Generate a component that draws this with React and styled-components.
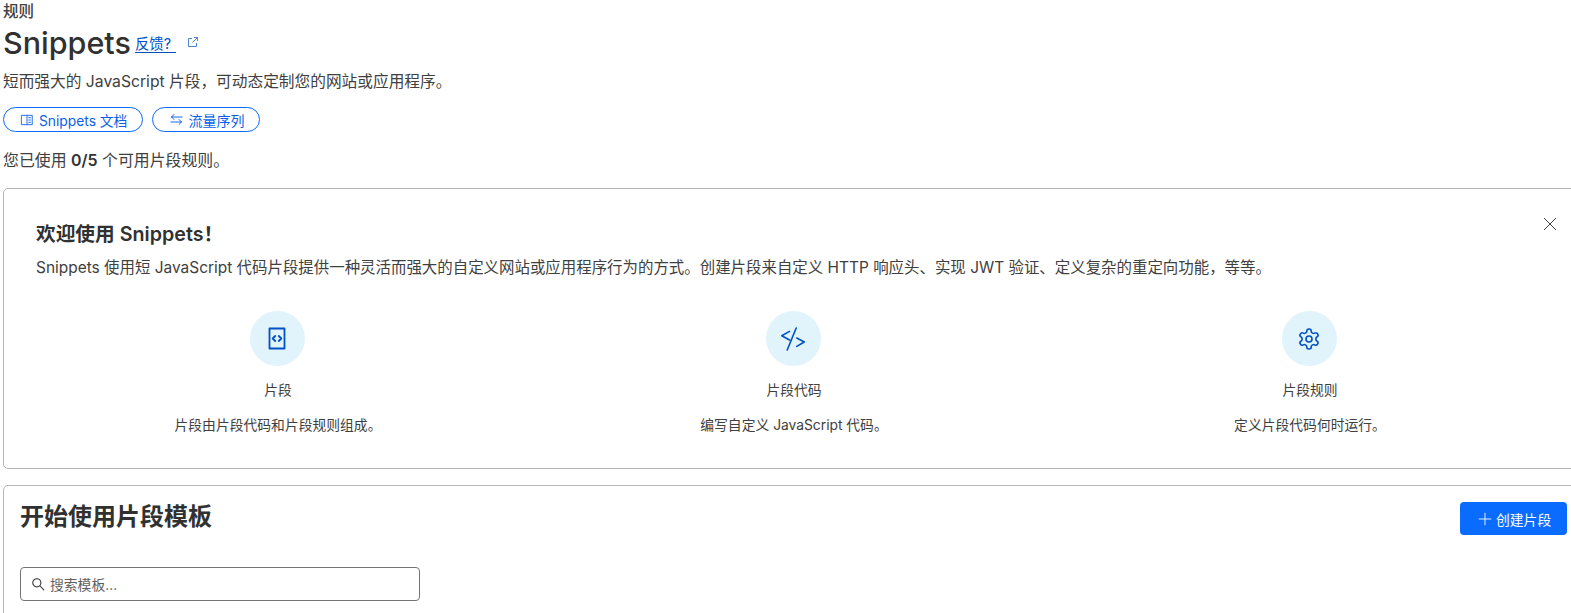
import React from "react";
import styled, { createGlobalStyle } from "styled-components";

const Global = createGlobalStyle`
  html, body { margin: 0; padding: 0; background: #fff; overflow: hidden; }
  body { font-family: Inter, "Noto Sans CJK SC", sans-serif; color: #313131; }
  * { box-sizing: border-box; }
`;
const Page = styled.div`
  width: 1581px;
  height: 613px;
  padding-left: 3px;
  overflow: hidden;
`;
const Eyebrow = styled.div`
  font-size: 15.5px; font-weight: 500; line-height: 19px; height: 19px; margin-top: 2px; color: #404040;
`;
const TitleRow = styled.div`
  display: flex; align-items: center; height: 44px;
`;
const Title = styled.h1`
  margin: 0; font-size: 30.5px; font-weight: 500; line-height: 44px; color: #313131;
`;
const Feedback = styled.a`
  display: inline-flex; width: 41px; margin-left: 4px; font-size: 14.4px; line-height: 17px; color: #0051c3; border-bottom: 1px solid #0051c3; position: relative; top: 1px;
`;
const External = styled.svg`
  width: 12px; height: 12px; margin-left: 11px; color: #0051c3; opacity: .7; margin-top: -3px;
`;
const Lead = styled.p`
  margin: 6px 0 0; font-size: 15.7px; line-height: 22px; color: #404040;
`;
const Pills = styled.div`
  display: flex; gap: 9px; margin-top: 14px;
`;
const Pill = styled.a`
  display: flex; align-items: center; gap: ${p => p.$gap || 5}px; height: 25px; padding: 0 15px 0 16px; border: 1px solid #0a6cff; border-radius: 13px; color: #0a5fe8; font-size: ${p => p.$size || 13.8}px; white-space: nowrap;
`;
const Usage = styled.p`
  margin: 19px 0 0; font-size: 15.9px; line-height: 20px; color: #404040;
  b { font-weight: 600; color: #313131; }
`;
const Card = styled.section`
  position: relative; border: 1px solid #b6b6b6; border-radius: 5px; background: #fff;
`;
const Welcome = styled(Card)`
  margin-top: 17px; height: 281px; padding: 32px 16px 0 32px;
`;
const WelcomeTitle = styled.h2`
  margin: 0; font-size: 19.7px; line-height: 26px; font-weight: 600; color: #313131;
`;
const WelcomeText = styled.p`
  margin: 10px 0 0; font-size: 15.45px; line-height: 22px; color: #404040;
`;
const Close = styled.svg`
  position: absolute; top: 28px; left: 1539px; width: 14px; height: 14px; color: #404040;
`;
const Columns = styled.div`
  display: grid; grid-template-columns: repeat(3, 516px); margin: 32px 0 0 -16px;
`;
const Col = styled.div`
  display: flex; flex-direction: column; align-items: center;
`;
const IconCircle = styled.div`
  display: flex; align-items: center; justify-content: center; width: 55px; height: 55px; margin-right: 2px; border-radius: 50%; background: #e1f3fb; color: #0051c3;
`;
const ColTitle = styled.div`
  margin-top: 12px; font-size: 13.8px; line-height: 24px; color: #404040;
`;
const ColText = styled.div`
  margin-top: 11px; font-size: 13.8px; line-height: 24px; color: #404040;
`;
const Templates = styled(Card)`
  margin-top: 16px; height: 200px; padding: 0 16px;
`;
const TemplatesHead = styled.div`
  display: flex; justify-content: space-between; align-items: flex-start; padding-top: 16px;
`;
const TemplatesTitle = styled.h2`
  margin: 0; font-size: 24px; line-height: 30px; font-weight: 700; color: #313131;
`;
const CreateButton = styled.button`
  display: flex; align-items: center; gap: 4px; width: 107px; height: 33px; margin-right: -3px; padding: 0 0 0 18px; border: 0; border-radius: 4px; background: #0a6cff; color: #fff; font: 13.8px Inter, "Noto Sans CJK SC", sans-serif;
`;
const Search = styled.div`
  display: flex; align-items: center; gap: 5px; width: 400px; height: 34px; margin-top: 32px; padding: 0 10px; border: 1px solid #757575; border-radius: 4px; font-size: 13.8px; color: #5f5f5f;
  svg { color: #313131; }
`;

const Stroke = ({ size = 16, w = 1.5, children }) => (
  <svg width={size} height={size} viewBox="0 0 24 24" fill="none" stroke="currentColor" strokeWidth={w} strokeLinecap="round" strokeLinejoin="round">{children}</svg>
);

export default function App() {
  return (
    <Page>
      <Global />
      <Eyebrow>规则</Eyebrow>
      <TitleRow>
        <Title>Snippets</Title>
        <Feedback>反馈?</Feedback>
        <External viewBox="0 0 12 12" fill="none" stroke="currentColor" strokeWidth="1">
          <path d="M5 2.5H1.500v8h8V7M7 1.500h3.500V5M10.500 1.500 5.500 6.500" />
        </External>
      </TitleRow>
      <Lead>短而强大的 JavaScript 片段，可动态定制您的网站或应用程序。</Lead>
      <Pills>
        <Pill>
          <Stroke size={14}><path d="M3 4h18v16H3zM12 4v16M15 8h3M15 12h3M15 16h3" /></Stroke>
          Snippets 文档
        </Pill>
        <Pill $gap={4} $size={14}>
          <Stroke size={15}><path d="M21 8H4M8 4 4 8l4 4M3 16h17M16 12l4 4-4 4" /></Stroke>
          流量序列
        </Pill>
      </Pills>
      <Usage>您已使用 <b>0/5</b> 个可用片段规则。</Usage>
      <Welcome>
        <Close viewBox="0 0 14 14" fill="none" stroke="currentColor" strokeWidth="1"><path d="M1 1l12 12M13 1 1 13" /></Close>
        <WelcomeTitle>欢迎使用 Snippets！</WelcomeTitle>
        <WelcomeText>Snippets 使用短 JavaScript 代码片段提供一种灵活而强大的自定义网站或应用程序行为的方式。创建片段来自定义 HTTP 响应头、实现 JWT 验证、定义复杂的重定向功能，等等。</WelcomeText>
        <Columns>
          <Col>
            <IconCircle>
              <svg width="18" height="23" viewBox="0 0 18 23" fill="none" stroke="currentColor" strokeWidth="1.800" strokeLinecap="round" strokeLinejoin="round">
                <path d="M1.500 1.500h15v20h-15zM7.200 9 4.700 11.500l2.500 2.500M10.800 9l2.500 2.500-2.500 2.500" />
              </svg>
            </IconCircle>
            <ColTitle>片段</ColTitle>
            <ColText>片段由片段代码和片段规则组成。</ColText>
          </Col>
          <Col>
            <IconCircle>
              <svg width="24" height="24" viewBox="0 0 24 24" fill="none" stroke="currentColor" strokeWidth="1.600" strokeLinecap="round" strokeLinejoin="round">
                <path d="M8.500 4.400.8 8.700 8.500 13M15.800 11l7.400 4-7.400 4.400M15.200 1 6.200 23" />
              </svg>
            </IconCircle>
            <ColTitle>片段代码</ColTitle>
            <ColText>编写自定义 JavaScript 代码。</ColText>
          </Col>
          <Col>
            <IconCircle>
              <Stroke size={24} w={1.6}>
                <path d="M12.220 2h-.44a2 2 0 0 0-2 2v.18a2 2 0 0 1-1 1.730l-.43.25a2 2 0 0 1-2 0l-.15-.08a2 2 0 0 0-2.730.73l-.22.38a2 2 0 0 0 .73 2.730l.15.1a2 2 0 0 1 1 1.720v.51a2 2 0 0 1-1 1.740l-.15.09a2 2 0 0 0-.73 2.730l.22.38a2 2 0 0 0 2.730.73l.15-.08a2 2 0 0 1 2 0l.43.25a2 2 0 0 1 1 1.730V20a2 2 0 0 0 2 2h.44a2 2 0 0 0 2-2v-.18a2 2 0 0 1 1-1.730l.43-.25a2 2 0 0 1 2 0l.15.08a2 2 0 0 0 2.730-.73l.22-.39a2 2 0 0 0-.73-2.730l-.15-.08a2 2 0 0 1-1-1.740v-.5a2 2 0 0 1 1-1.740l.15-.09a2 2 0 0 0 .73-2.730l-.22-.38a2 2 0 0 0-2.730-.73l-.15.08a2 2 0 0 1-2 0l-.43-.25a2 2 0 0 1-1-1.730V4a2 2 0 0 0-2-2z" />
                <circle cx="12" cy="12" r="3" />
              </Stroke>
            </IconCircle>
            <ColTitle>片段规则</ColTitle>
            <ColText>定义片段代码何时运行。</ColText>
          </Col>
        </Columns>
      </Welcome>
      <Templates>
        <TemplatesHead>
          <TemplatesTitle>开始使用片段模板</TemplatesTitle>
          <CreateButton>
            <Stroke size={14} w={1.5}><path d="M12 2v20M2 12h20" /></Stroke>
            创建片段
          </CreateButton>
        </TemplatesHead>
        <Search>
          <Stroke size={14} w={1.8}><circle cx="10" cy="10" r="7" /><path d="m15 15 7 7" /></Stroke>
          搜索模板...
        </Search>
      </Templates>
    </Page>
  );
}
